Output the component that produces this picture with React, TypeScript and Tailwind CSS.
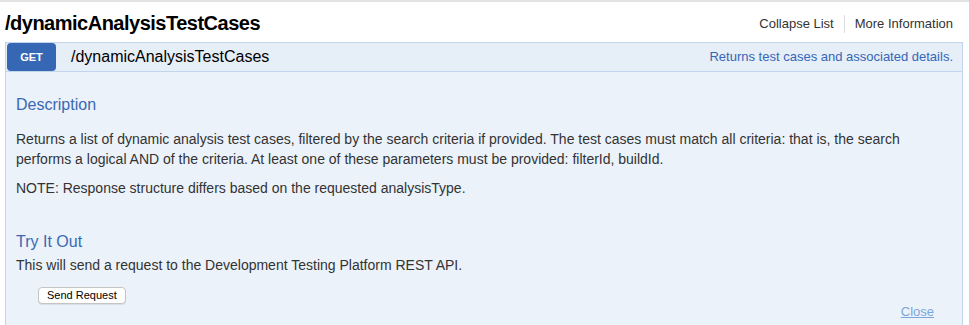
export default function App() {
  return (
    <div className="w-[969px] h-[325px] overflow-hidden bg-white text-[#333] font-['Liberation_Sans',Arial,sans-serif] border-t-2 border-[#e3e3e3]">
      <div className="flex items-center justify-between h-[40px] pl-[5px] pr-[16px]">
        <h2 className="text-[20px] font-bold text-black leading-none tracking-[-0.5px] pt-[1px]">/dynamicAnalysisTestCases</h2>
        <div className="flex items-center text-[13px] text-[#333] pt-[4px]">
          <span>Collapse List</span>
          <span className="mx-[10px] h-[18px] w-px bg-[#dcdcdc]" />
          <span>More Information</span>
        </div>
      </div>

      <div className="ml-[5px] mr-[6px] border border-[#c3d5ec] bg-[#ebf2fa]">
        <div className="flex items-center h-[29px] bg-[#e6eef7] border-b border-[#c3d5ec]">
          <span className="flex items-center justify-center w-[49px] h-[28px] ml-px bg-[#3567b5] text-white text-[11px] font-bold rounded-sm">
            GET
          </span>
          <span className="ml-[15px] text-[16px] text-black">/dynamicAnalysisTestCases</span>
          <span className="ml-auto pr-[9px] text-[13px] text-[#3566b8]">Returns test cases and associated details.</span>
        </div>

        <div className="px-[10px] pt-[23px] pb-[20px]">
          <h3 className="text-[16px] leading-[20px] text-[#3a68b5]">Description</h3>
          <p className="mt-[14px] text-[14px] leading-[20px]">
            Returns a list of dynamic analysis test cases, filtered by the search criteria if provided. The test cases must match all criteria: that is, the search
            <br />
            performs a logical AND of the criteria. At least one of these parameters must be provided: filterId, buildId.
          </p>
          <p className="mt-[9px] text-[14px] leading-[20px]">NOTE: Response structure differs based on the requested analysisType.</p>

          <h3 className="mt-[34px] text-[16px] leading-[20px] text-[#3a68b5]">Try It Out</h3>
          <p className="mt-[3px] text-[14px] leading-[20px]">This will send a request to the Development Testing Platform REST API.</p>

          <div className="flex items-start justify-between">
            <button className="mt-[12px] ml-[22px] h-[17px] px-[8px] rounded-[4px] border border-[#c4c4c4] bg-white text-[11px] leading-none text-black shadow-[0_1px_0_rgba(0,0,0,0.08)]">
              Send Request
            </button>
            <a className="mt-[30px] mr-[18px] text-[13px] leading-[14px] text-[#7ba4da] underline">Close</a>
          </div>
        </div>
      </div>
    </div>
  );
}
